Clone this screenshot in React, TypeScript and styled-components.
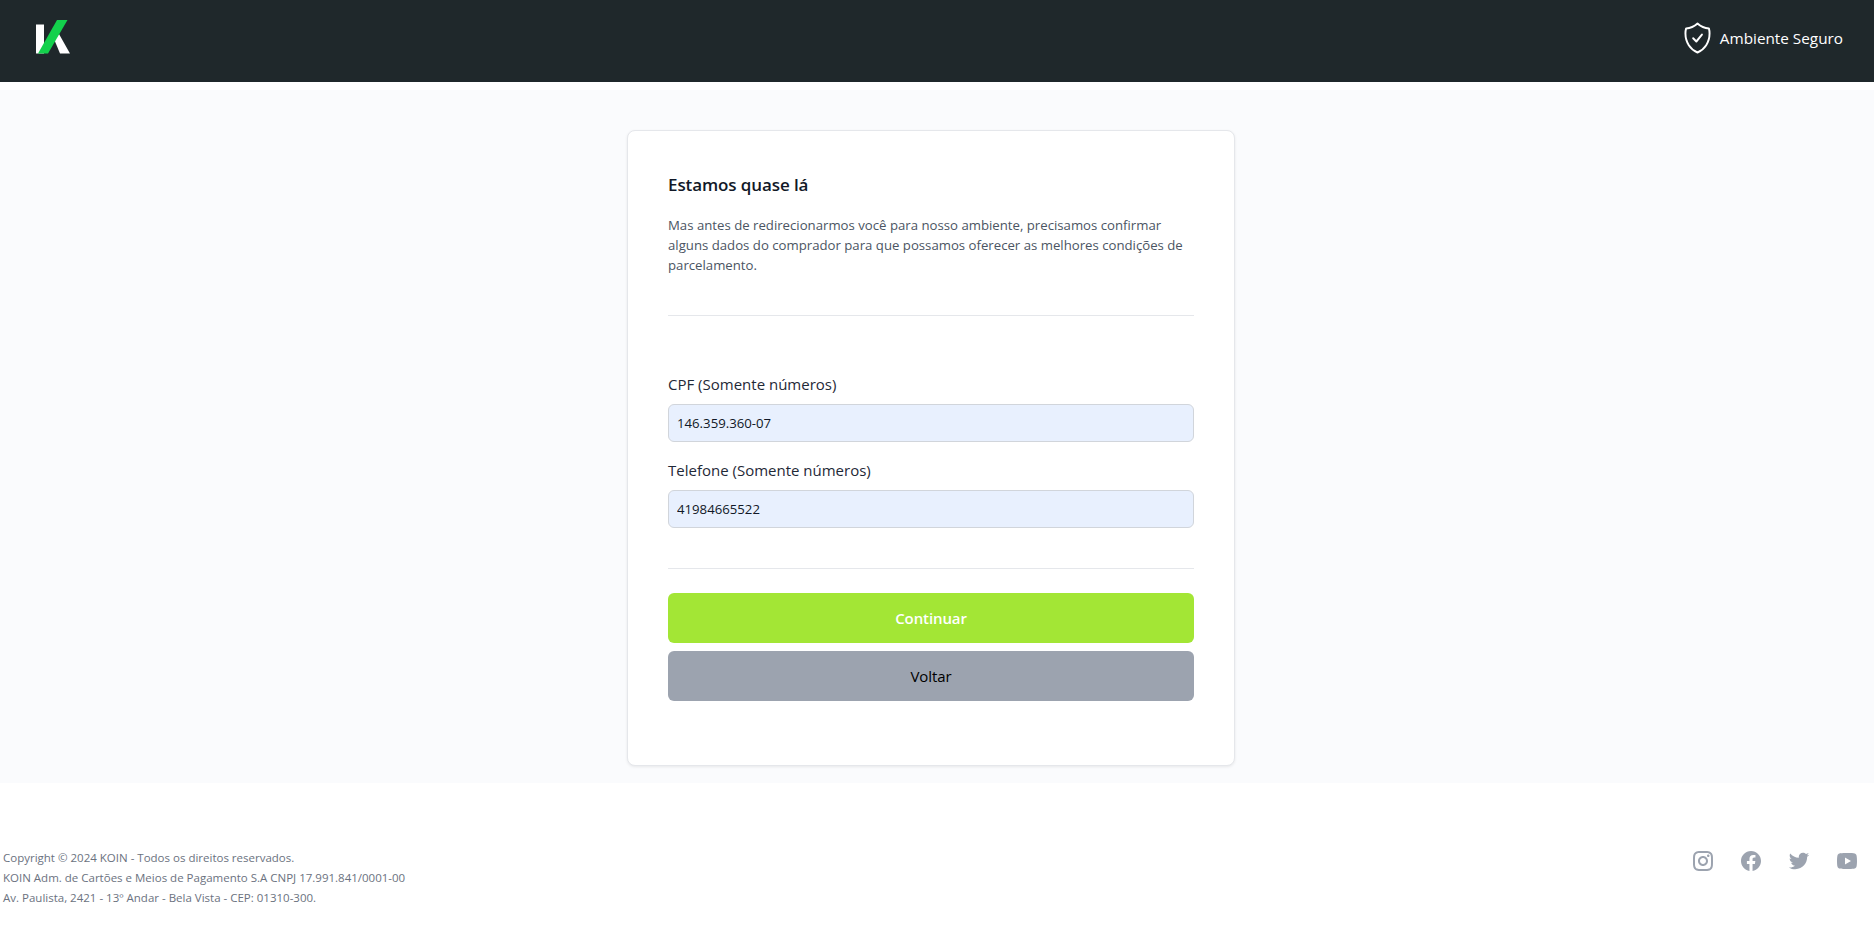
import styled, { createGlobalStyle } from 'styled-components';
import { RiFacebookCircleFill, RiInstagramLine, RiTwitterFill, RiYoutubeFill } from 'react-icons/ri';

const GlobalStyle = createGlobalStyle`
  html, body {
    margin: 0;
    padding: 0;
    background: #ffffff;
    font-family: "Open Sans", "Noto Sans", sans-serif;
  }
  * {
    box-sizing: border-box;
  }
`;

const Header = styled.header`
  height: 82px;
  background: #1f282b;
  display: flex;
  align-items: center;
  justify-content: space-between;
  padding: 0 31px 6px 36px;
`;

const Secure = styled.div`
  display: flex;
  align-items: center;
  gap: 9px;
  color: #ffffff;
  font-size: 15.3px;
`;

const Main = styled.main`
  margin-top: 8px;
  height: 693px;
  background: #fafbfd;
  display: flex;
  justify-content: center;
  padding: 40px 12px 0 0;
`;

const Card = styled.section`
  width: 608px;
  height: 636px;
  background: #ffffff;
  border: 1px solid #e5e7eb;
  border-radius: 8px;
  box-shadow: 0 1px 3px rgba(0, 0, 0, 0.08);
  padding: 40px;
`;

const Title = styled.h1`
  margin: 0 0 16px;
  font-size: 17px;
  line-height: 28px;
  font-weight: 600;
  color: #111827;
  letter-spacing: -0.1px;
`;

const Lead = styled.p`
  margin: 0;
  font-size: 13.2px;
  line-height: 20px;
  color: #4b5563;
`;

const Divider = styled.hr<{ $top: number }>`
  margin: ${({ $top }) => $top}px 0 0;
  border: 0;
  border-top: 1px solid #e5e7eb;
`;

const Form = styled.form`
  display: flex;
  flex-direction: column;
  margin-top: 56px;
`;

const Field = styled.label`
  display: flex;
  flex-direction: column;
  gap: 8px;
  margin-bottom: 16px;
  font-size: 15px;
  line-height: 24px;
  color: #1f2937;
`;

const Input = styled.input`
  height: 38px;
  padding: 0 8px;
  border: 1px solid #d1d5db;
  border-radius: 6px;
  background: #e8f0fe;
  color: #111827;
  font: inherit;
  font-size: 13.2px;
`;

const Actions = styled.div`
  display: flex;
  flex-direction: column;
  gap: 8px;
  margin-top: 24px;
`;

const Button = styled.button<{ $primary?: boolean }>`
  height: 50px;
  border: 0;
  border-radius: 6px;
  background: ${({ $primary }) => ($primary ? '#a3e635' : '#9ca3af')};
  color: ${({ $primary }) => ($primary ? '#ffffff' : '#000000')};
  font-family: inherit;
  font-size: 15px;
  font-weight: ${({ $primary }) => ($primary ? 600 : 500)};
  letter-spacing: -0.1px;
  cursor: pointer;
`;

const Footer = styled.footer`
  display: flex;
  justify-content: space-between;
  padding: 65px 15px 0 3px;
`;

const Legal = styled.div`
  font-size: 11.5px;
  line-height: 20px;
  color: #6b7280;
`;

const Socials = styled.div`
  display: flex;
  gap: 24px;
  margin-top: 1px;
  color: #9ca3af;
  font-size: 24px;
`;

function Logo() {
  return (
    <svg width="35" height="36" viewBox="0 0 35 36" aria-label="KOIN">
      <path d="M0 4.5h8v29H0z" fill="#ffffff" />
      <path d="M18 19l5-5 11 19.5h-10z" fill="#ffffff" />
      <path d="M21 0h10.5L12 33.5H2z" fill="#13d14c" />
    </svg>
  );
}

function ShieldCheck() {
  return (
    <svg width="27" height="32" viewBox="0 0 28 32" preserveAspectRatio="none" fill="none" stroke="#ffffff" strokeWidth="2" strokeLinecap="round" strokeLinejoin="round">
      <path d="M14 1.5C10.5 4.6 6.5 6.2 2.2 6.4 1.7 8 1.5 9.7 1.5 11.6 1.5 20.4 6.6 27.4 14 30.5 21.4 27.4 26.5 20.4 26.5 11.6 26.5 9.7 26.3 8 25.8 6.4 21.5 6.2 17.5 4.6 14 1.5Z" />
      <path d="M9.5 16.2 12.8 19.5 18.6 12.6" />
    </svg>
  );
}

export default function App() {
  return (
    <>
      <GlobalStyle />
      <Header>
        <Logo />
        <Secure>
          <ShieldCheck />
          Ambiente Seguro
        </Secure>
      </Header>
      <Main>
        <Card>
          <Title>Estamos quase lá</Title>
          <Lead>
            Mas antes de redirecionarmos você para nosso ambiente, precisamos confirmar alguns dados do comprador para
            que possamos oferecer as melhores condições de parcelamento.
          </Lead>
          <Divider $top={40} />
          <Form>
            <Field>
              CPF (Somente números)
              <Input readOnly value="146.359.360-07" />
            </Field>
            <Field>
              Telefone (Somente números)
              <Input readOnly value="41984665522" />
            </Field>
            <Divider $top={24} />
            <Actions>
              <Button type="button" $primary>Continuar</Button>
              <Button type="button">Voltar</Button>
            </Actions>
          </Form>
        </Card>
      </Main>
      <Footer>
        <Legal>
          Copyright © 2024 KOIN - Todos os direitos reservados.
          <br />
          KOIN Adm. de Cartões e Meios de Pagamento S.A CNPJ 17.991.841/0001-00
          <br />
          Av. Paulista, 2421 - 13º Andar - Bela Vista - CEP: 01310-300.
        </Legal>
        <Socials>
          <RiInstagramLine />
          <RiFacebookCircleFill />
          <RiTwitterFill />
          <RiYoutubeFill />
        </Socials>
      </Footer>
    </>
  );
}
